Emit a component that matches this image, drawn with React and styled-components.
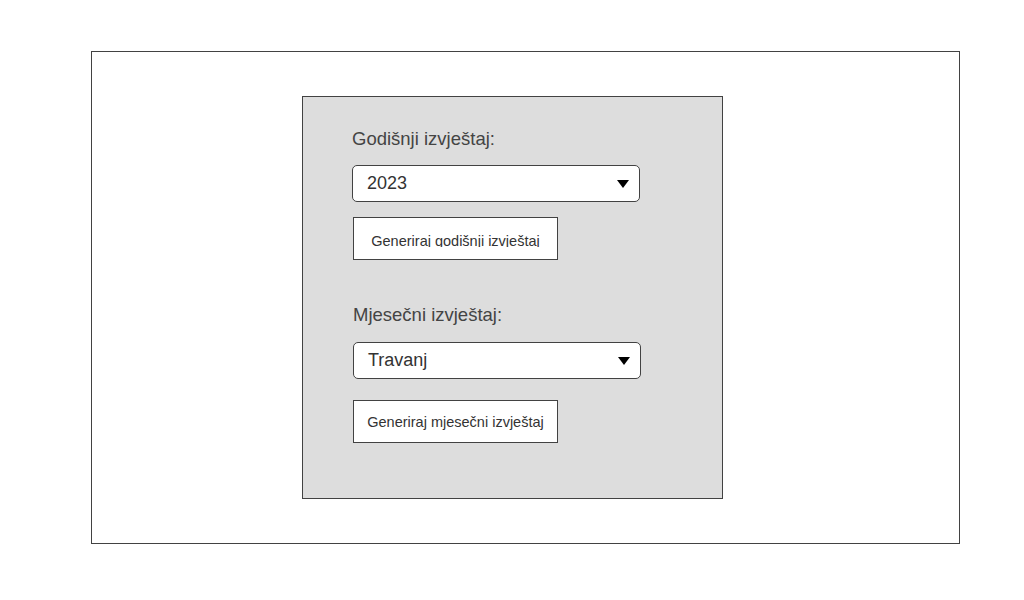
import React from "react";
import styled, { createGlobalStyle } from "styled-components";

const Global = createGlobalStyle`
  html, body { margin: 0; padding: 0; background: #ffffff; }
  body { font-family: "Liberation Sans", Arial, sans-serif; }
  * { box-sizing: border-box; }
`;

const Frame = styled.div`
  margin: 51px 0 0 91px;
  width: 869px;
  height: 493px;
  border: 1px solid #424242;
  background: #ffffff;
  padding: 44px 0 0 210px;
`;

const Panel = styled.div`
  width: 421px;
  height: 403px;
  border: 1px solid #424242;
  background: #dddddd;
  padding: 32px 0 0 49px;
  display: flex;
  flex-direction: column;
`;

const Section = styled.section`
  display: flex;
  flex-direction: column;
  align-items: flex-start;
  padding-left: ${(p) => p.$inset}px;
  margin-top: ${(p) => p.$top}px;
`;

const Label = styled.div`
  font-size: 18.5px;
  line-height: 20px;
  color: #444444;
`;

const Select = styled.div`
  margin-top: ${(p) => p.$gap}px;
  width: 288px;
  height: 37px;
  border: 1px solid #424242;
  border-radius: 5px;
  background: #ffffff;
  display: flex;
  align-items: center;
  justify-content: space-between;
  padding: 0 10px 0 14px;
  font-size: 18px;
  color: #333333;
`;

const Caret = styled.span`
  width: 0;
  height: 0;
  border-left: 6px solid transparent;
  border-right: 6px solid transparent;
  border-top: 8px solid #000000;
  margin-top: 1px;
`;

const Button = styled.div`
  margin-top: ${(p) => p.$gap}px;
  margin-left: ${(p) => p.$nudge || 0}px;
  width: 205px;
  height: 43px;
  border: 1px solid #424242;
  background: #ffffff;
  display: flex;
  align-items: center;
  justify-content: center;
  font-size: 14.5px;
  color: #333333;
`;

const Caption = styled.span`
  display: block;
  line-height: 16px;
  height: ${(p) => p.$clip || 16}px;
  overflow: hidden;
  white-space: nowrap;
  margin-top: ${(p) => (p.$clip ? 2 : 0)}px;
`;

export default function App() {
  return (
    <>
      <Global />
      <Frame>
        <Panel>
          <Section $inset={0} $top={0}>
            <Label>Godišnji izvještaj:</Label>
            <Select $gap={16}>
              <span>2023</span>
              <Caret />
            </Select>
            <Button $gap={15} $nudge={1}>
              <Caption $clip={14}>Generiraj godišnji izvještaj</Caption>
            </Button>
          </Section>
          <Section $inset={1} $top={45}>
            <Label>Mjesečni izvještaj:</Label>
            <Select $gap={17}>
              <span>Travanj</span>
              <Caret />
            </Select>
            <Button $gap={21}>
              <Caption>Generiraj mjesečni izvještaj</Caption>
            </Button>
          </Section>
        </Panel>
      </Frame>
    </>
  );
}
